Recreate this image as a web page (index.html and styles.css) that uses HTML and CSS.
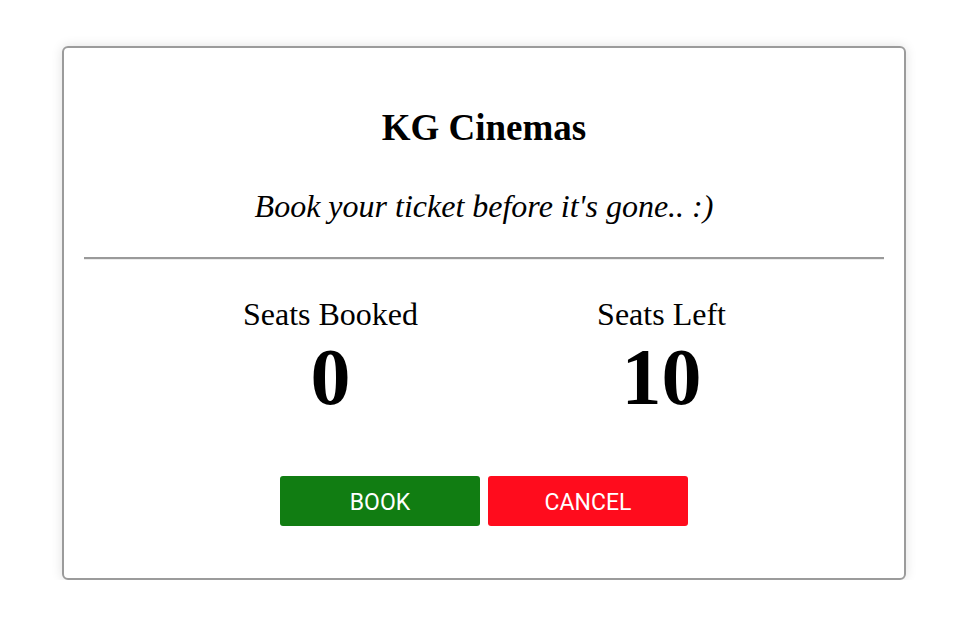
FILE: index.html
```html
<!DOCTYPE html>
<html>
<head>
<meta charset="utf-8">
<title>KG Cinemas</title>
<link rel="stylesheet" href="styles.css">
</head>
<body>
<div class="card">
  <h1 class="title">KG Cinemas</h1>
  <p class="subtitle">Book your ticket before it's gone.. :)</p>
  <hr class="divider">
  <div class="stats">
    <div class="stat">
      <div class="stat-label">Seats Booked</div>
      <div class="stat-value">0</div>
    </div>
    <div class="stat">
      <div class="stat-label">Seats Left</div>
      <div class="stat-value">10</div>
    </div>
  </div>
  <div class="actions">
    <button class="btn btn-book">BOOK</button>
    <button class="btn btn-cancel">CANCEL</button>
  </div>
</div>
</body>
</html>
```

FILE: styles.css
```css
html, body {
  margin: 0;
  padding: 0;
  background: #ffffff;
}

body {
  font-family: "Liberation Serif", "Times New Roman", serif;
  color: #000;
}

.card {
  box-sizing: border-box;
  width: 844px;
  margin: 46px 0 0 62px;
  padding: 61px 20px 52px;
  border: 2px solid #9b9b9b;
  border-radius: 6px;
  box-shadow: 0 0 12px rgba(0, 0, 0, 0.12);
  text-align: center;
}

.title {
  margin: 0;
  font-size: 37px;
  line-height: 1;
  font-weight: bold;
}

.subtitle {
  margin: 44px 0 0;
  font-size: 32px;
  line-height: 1;
  font-style: italic;
}

.divider {
  margin: 35px 0 0;
  height: 0;
  border: 0;
  border-top: 2px solid #9a9a9a;
  border-bottom: 1px solid #ececec;
}

.stats {
  display: flex;
  justify-content: center;
  padding-left: 24px;
  margin-top: 38px;
}

.stat {
  width: 331px;
}

.stat-label {
  font-size: 32px;
  line-height: 1;
}

.stat-value {
  margin-top: 7px;
  font-size: 80px;
  line-height: 1;
  font-weight: bold;
}

.actions {
  display: flex;
  justify-content: center;
  gap: 8px;
  margin-top: 59px;
}

.btn {
  width: 200px;
  height: 50px;
  border: 0;
  border-radius: 3px;
  color: #fff;
  font-family: Roboto, "Liberation Sans", Arial, sans-serif;
  font-size: 23px;
  padding: 3px 0 0;
}

.btn-book {
  background: #117d12;
}

.btn-cancel {
  background: #ff0c1d;
}
```
